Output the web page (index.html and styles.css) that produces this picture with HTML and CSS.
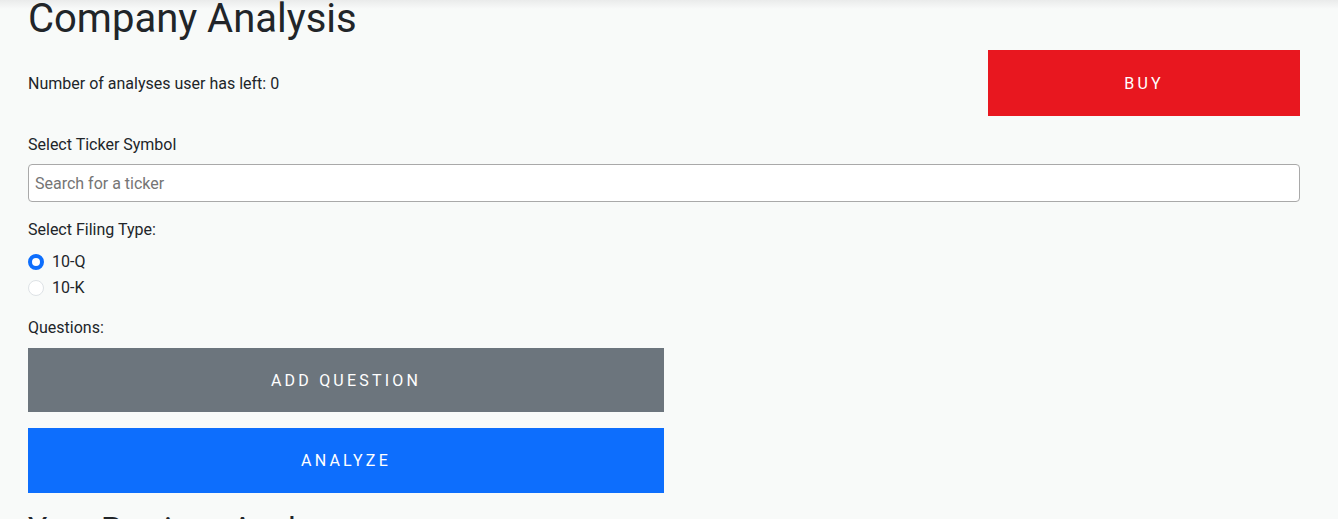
FILE: index.html
```html
<!DOCTYPE html>
<html lang="en">
<head>
<meta charset="utf-8">
<title>Company Analysis</title>
<link rel="stylesheet" href="styles.css">
</head>
<body>
<main class="container">
  <h1 class="title">Company Analysis</h1>
  <div class="credits-row">
    <p class="credits">Number of analyses user has left: 0</p>
    <button class="btn btn-buy">BUY</button>
  </div>
  <div class="field field-ticker">
    <label class="label" for="ticker">Select Ticker Symbol</label>
    <input id="ticker" class="input" type="text" placeholder="Search for a ticker">
  </div>
  <div class="field">
    <div class="label">Select Filing Type:</div>
    <label class="radio-row"><span class="radio radio-on"></span>10-Q</label>
    <label class="radio-row"><span class="radio"></span>10-K</label>
  </div>
  <div class="questions">
    <div class="label">Questions:</div>
    <button class="btn btn-wide btn-gray">ADD QUESTION</button>
    <button class="btn btn-wide btn-blue">ANALYZE</button>
  </div>
  <h2 class="subtitle">Your Previous Analyses</h2>
</main>
</body>
</html>
```
FILE: styles.css
```css
* { box-sizing: border-box; }
html, body { margin: 0; padding: 0; }
body {
  font-family: Roboto, "Liberation Sans", sans-serif;
  font-size: 16px;
  line-height: 24px;
  color: #212529;
  background: linear-gradient(#eaebeb 0, #f8faf9 9px) #f8faf9;
  height: 519px;
  overflow: hidden;
}
.container {
  padding: 0 38px 0 28px;
}
.title {
  font-size: 40px;
  font-weight: 400;
  line-height: 48px;
  margin: -5px 0 0 0;
}
.credits-row {
  display: flex;
  align-items: center;
  justify-content: space-between;
  margin-top: 7px;
}
.credits { margin: 0; padding-top: 2px; }
.btn {
  border: 0;
  border-radius: 0;
  font-family: Roboto, "Liberation Sans", sans-serif;
  font-size: 16px;
  font-weight: 400;
  letter-spacing: 3.2px;
  color: #fff;
  cursor: pointer;
  display: block;
}
.btn-buy {
  width: 312px;
  height: 66px;
  background: #e8171f;
}
.field { margin-top: 16px; }
.field-ticker { margin-top: 17px; }
.label { display: block; margin-bottom: 8px; }
.field-ticker .label { margin-bottom: 7px; }
.input {
  display: block;
  width: 100%;
  height: 38px;
  border: 1px solid #a9a9a9;
  border-radius: 4px;
  background: #fff;
  padding: 0 6px;
  font-family: Roboto, "Liberation Sans", sans-serif;
  font-size: 16px;
  color: #212529;
}
.input::placeholder { color: #757575; }
.radio-row {
  display: flex;
  align-items: center;
  gap: 8px;
  height: 24px;
  margin-bottom: 2px;
}
.radio {
  width: 16px;
  height: 16px;
  border-radius: 50%;
  border: 1px solid #dee2e6;
  background: #fff;
}
.radio-on {
  border: 4px solid #0d6efd;
  background: #fff;
}
.questions { margin-top: 16px; }
.questions .label { margin-bottom: 8px; }
.btn-wide {
  width: 636px;
  height: 64px;
}
.btn-gray { background: #6c757d; }
.btn-blue { background: #0d6efd; margin-top: 16px; height: 65px; }
.subtitle {
  font-size: 32px;
  font-weight: 400;
  line-height: 38px;
  margin: 16px 0 0 0;
}
```
